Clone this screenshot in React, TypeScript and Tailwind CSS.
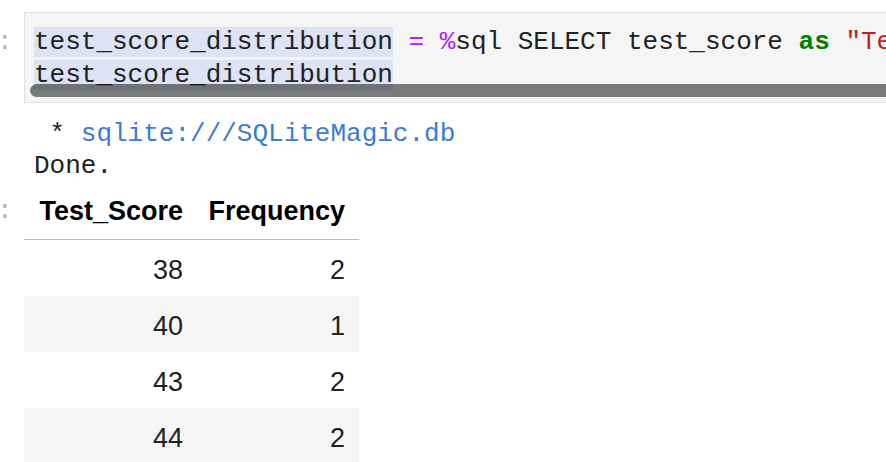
const MONO = "font-['Liberation_Mono','DejaVu_Sans_Mono',monospace]";
const SANS = "font-['Liberation_Sans',Arial,sans-serif]";

const ROWS = [
  { score: 38, freq: 2 },
  { score: 40, freq: 1 },
  { score: 43, freq: 2 },
  { score: 44, freq: 2 }
];

function Prompt({ top }: { top: string }) {
  return (
    <div className={`w-[24px] shrink-0 ${top} ${MONO} text-[26px] text-[#b3b3b3]`}>
      <span className="-ml-[3px] block">:</span>
    </div>
  );
}

export default function App() {
  return (
    <div className="h-[462px] w-[886px] overflow-hidden bg-white text-[#212121]">
      {/* code cell */}
      <div className="flex pt-[12px]">
        <Prompt top="pt-[13px] leading-[34px]" />
        <div className="relative min-w-0 flex-1 overflow-hidden border-y border-l border-[#e0e0e0] bg-[#f5f5f5] pt-[13px] pb-[10px] pl-[9px]">
          <div className={`${MONO} text-[26px] leading-[33px] whitespace-pre`}>
            <div>
              <span className="bg-[#dde2f5]">test_score_distribution</span>{" "}
              <span className="text-[#aa22ff]">=</span>{" "}
              <span className="text-[#aa22ff]">%</span>sql SELECT test_score{" "}
              <span className="font-bold text-[#008000]">as</span>{" "}
              <span className="text-[#ba2121]">"Test_Score", count(*)</span>
            </div>
            <div>
              <span className="bg-[#dde2f5]">test_score_distribution</span>
            </div>
          </div>
          <div className="absolute bottom-[5px] left-[5px] h-[13px] w-[1000px] rounded-full bg-[rgba(0,0,0,0.5)]" />
        </div>
      </div>

      {/* output text */}
      <div className={`mt-[15px] pl-[34px] ${MONO} text-[26px] leading-[32px] whitespace-pre`}>
        <div>
          {" * "}
          <span className="text-[#3b7bd4]">sqlite:///SQLiteMagic.db</span>
        </div>
        <div>Done.</div>
      </div>

      {/* result table */}
      <div className="flex">
        <Prompt top="pt-[13px] leading-[32px]" />
        <table className={`table-fixed border-collapse ${SANS} text-[27px] leading-[32px]`}>
          <thead>
            <tr className="border-b border-[#bdbdbd]">
              <th className="w-[173px] pt-[13px] pr-[14px] pb-[12px] text-right font-bold text-black">
                Test_Score
              </th>
              <th className="w-[162px] pt-[13px] pr-[14px] pb-[12px] text-right font-bold text-black">
                Frequency
              </th>
            </tr>
          </thead>
          <tbody>
            {ROWS.map((r, i) => (
              <tr key={r.score} className={i % 2 === 1 ? "bg-[#f5f5f5]" : "bg-white"}>
                <td className="pt-[14px] pr-[14px] pb-[10px] text-right">{r.score}</td>
                <td className="pt-[14px] pr-[14px] pb-[10px] text-right">{r.freq}</td>
              </tr>
            ))}
          </tbody>
        </table>
      </div>
    </div>
  );
}
